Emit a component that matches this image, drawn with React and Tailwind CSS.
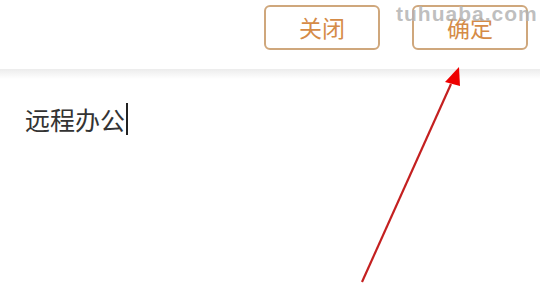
import React from 'react';

export default function App() {
  return (
    <div className="relative w-[540px] h-[300px] bg-white overflow-hidden" style={{ fontFamily: '"Noto Sans CJK SC", "Noto Sans", sans-serif' }}>
      {/* Header with buttons */}
      <div className="h-[69px] flex justify-end items-start gap-[32px] pt-[5px] pr-[12px]">
        <button className="w-[116px] h-[45px] rounded-[6px] border-2 border-[#cfa77c] text-[#d58b47] text-[23px] flex items-center justify-center">
          关闭
        </button>
        <button className="w-[116px] h-[45px] rounded-[6px] border-2 border-[#cfa77c] text-[#d58b47] text-[23px] flex items-center justify-center">
          确定
        </button>
      </div>
      <div className="h-[10px] bg-gradient-to-b from-[#ececec] to-white" />

      {/* Input text */}
      <div className="pl-[25px] pt-[24px] flex items-center">
        <span className="text-[25px] leading-none text-[#333]">远程办公</span>
        <span className="w-[2px] h-[32px] bg-[#222] ml-[1px]" />
      </div>

      {/* Watermark */}
      <div className="absolute top-[-2px] left-[396px] text-[21px] font-bold text-[#b4b4b4]/85 tracking-[1px]" style={{ fontFamily: '"Liberation Sans", sans-serif' }}>
        tuhuaba.com
      </div>

      {/* Annotation arrow */}
      <svg className="absolute inset-0" width="540" height="300" viewBox="0 0 540 300">
        <line x1="362" y1="282" x2="451" y2="84" stroke="#c42020" strokeWidth="2.2" />
        <polygon points="459,67 445,82 460,86" fill="#ee0000" />
      </svg>
    </div>
  );
}
